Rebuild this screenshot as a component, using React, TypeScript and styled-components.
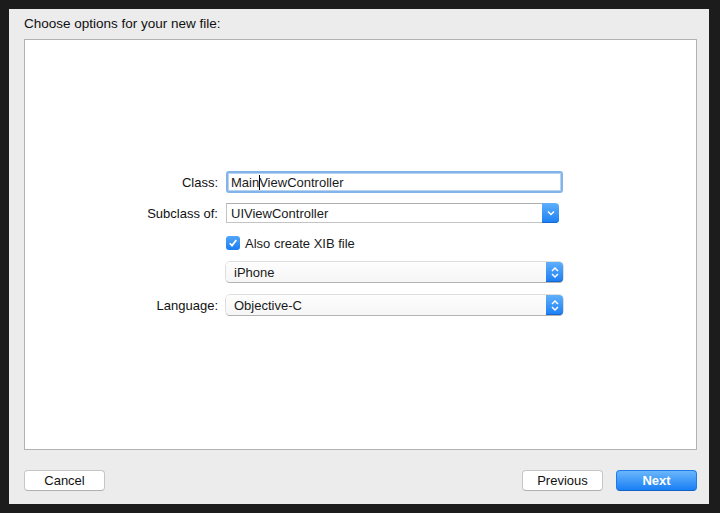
import React from 'react';
import styled, {createGlobalStyle} from 'styled-components';

const GlobalStyle = createGlobalStyle`
  html, body {
    margin: 0;
    padding: 0;
    background: #1c1c1c;
  }
  body {
    font-family: "Liberation Sans", Arial, sans-serif;
    font-size: 13px;
    color: #1a1a1a;
  }
`;

const Frame = styled.div`
  width: 720px;
  height: 513px;
  padding: 9px 11px 9px 9px;
  box-sizing: border-box;
  background: #1c1c1c;
`;

const Dialog = styled.div`
  height: 100%;
  background: #ececec;
  display: flex;
  flex-direction: column;
  padding: 0 12px 0 15px;
  box-sizing: border-box;
`;

const Title = styled.div`
  height: 30px;
  line-height: 29px;
  font-size: 13.5px;
  color: #111;
`;

const Panel = styled.div`
  flex: 1;
  background: #fff;
  border: 1px solid #b2b2b2;
  padding-top: 131px;
  display: flex;
  flex-direction: column;
`;

const Row = styled.div<{$top?: number; $height?: number}>`
  display: flex;
  align-items: center;
  margin-top: ${p => p.$top ?? 0}px;
  height: ${p => p.$height ?? 20}px;
`;

const Label = styled.div`
  width: 201px;
  padding-right: 8px;
  box-sizing: border-box;
  text-align: right;
  color: #111;
`;

const TextField = styled.div<{$width: number}>`
  width: ${p => p.$width}px;
  height: 22px;
  box-sizing: border-box;
  border: 2px solid #82b4ea;
  border-radius: 3px;
  box-shadow: inset 0 0 0 1px #b8d3f2;
  display: flex;
  align-items: center;
  padding-left: 3px;
  background: #fff;
`;

const Caret = styled.span`
  display: inline-block;
  width: 1px;
  height: 15px;
  background: #000;
  vertical-align: middle;
  margin: 0 -1px 0 0;
`;

const Combo = styled.div`
  display: flex;
  width: 333px;
  height: 20px;
`;

const ComboInput = styled.div`
  flex: 1;
  border: 1px solid #c4c4c4;
  border-top-color: #aeaeae;
  border-right: none;
  display: flex;
  align-items: center;
  padding-left: 4px;
  background: #fff;
`;

const BlueCap = styled.div<{$width: number}>`
  width: ${p => p.$width}px;
  height: 100%;
  border-radius: 0 4px 4px 0;
  background: linear-gradient(#5fb0fb, #1b7ef3);
  box-shadow: inset 0 -1px 0 #1467d0;
  display: flex;
  align-items: center;
  justify-content: center;
`;

const Popup = styled.div`
  width: 337px;
  height: 20px;
  display: flex;
  border-radius: 4px;
  box-shadow: 0 0 0 0.5px #bdbdbd, 0 1px 0 #a9a9a9;
  background: linear-gradient(#fdfdfd, #f6f6f6);
`;

const PopupText = styled.div`
  flex: 1;
  display: flex;
  align-items: center;
  padding-left: 8px;
`;

const Check = styled.div`
  width: 14px;
  height: 14px;
  border-radius: 3px;
  background: linear-gradient(#53a6f9, #1a7df2);
  display: flex;
  align-items: center;
  justify-content: center;
  margin-right: 5px;
`;

const CheckRow = styled.div`
  display: flex;
  align-items: center;
`;

const Footer = styled.div`
  height: 54px;
  display: flex;
  align-items: flex-start;
  padding-top: 20px;
  box-sizing: border-box;
  gap: 13px;
`;

const Button = styled.button<{$primary?: boolean}>`
  width: 81px;
  height: 21px;
  border-radius: 4px;
  font-family: "Liberation Sans", Arial, sans-serif;
  font-size: 13px;
  padding: 0;
  cursor: default;
  border: 1px solid ${p => (p.$primary ? '#1e7ae6' : '#c6c6c6')};
  border-bottom-color: ${p => (p.$primary ? '#1462c8' : '#b0b0b0')};
  background: ${p => (p.$primary ? 'linear-gradient(#6ab6fb, #1a7ff5)' : '#fff')};
  color: ${p => (p.$primary ? '#fff' : '#111')};
  font-weight: ${p => (p.$primary ? 'bold' : 'normal')};
`;

const Spacer = styled.div`
  flex: 1;
`;

function Chevron() {
  return (
    <svg width="8" height="6" viewBox="0 0 8 6">
      <path d="M1 1.5 L4 4.5 L7 1.5" fill="none" stroke="#fff" strokeWidth="1.5" />
    </svg>
  );
}

function Stepper() {
  return (
    <svg width="8" height="13" viewBox="0 0 8 13">
      <path d="M1 5 L4 2 L7 5 M1 8 L4 11 L7 8" fill="none" stroke="#fff" strokeWidth="1.5" />
    </svg>
  );
}

function CheckMark() {
  return (
    <svg width="10" height="10" viewBox="0 0 10 10">
      <path d="M1.8 5.2 L4 7.6 L8.3 2" fill="none" stroke="#fff" strokeWidth="1.7" />
    </svg>
  );
}

export default function App() {
  return (
    <Frame>
      <GlobalStyle />
      <Dialog>
        <Title>Choose options for your new file:</Title>
        <Panel>
          <Row $height={22}>
            <Label>Class:</Label>
            <TextField $width={337}>
              Main<Caret />ViewController
            </TextField>
          </Row>
          <Row $top={10}>
            <Label>Subclass of:</Label>
            <Combo>
              <ComboInput>UIViewController</ComboInput>
              <BlueCap $width={17}>
                <Chevron />
              </BlueCap>
            </Combo>
          </Row>
          <Row $top={10}>
            <Label />
            <CheckRow>
              <Check>
                <CheckMark />
              </Check>
              Also create XIB file
            </CheckRow>
          </Row>
          <Row $top={9}>
            <Label />
            <Popup>
              <PopupText>iPhone</PopupText>
              <BlueCap $width={17}>
                <Stepper />
              </BlueCap>
            </Popup>
          </Row>
          <Row $top={13}>
            <Label>Language:</Label>
            <Popup>
              <PopupText>Objective-C</PopupText>
              <BlueCap $width={17}>
                <Stepper />
              </BlueCap>
            </Popup>
          </Row>
        </Panel>
        <Footer>
          <Button>Cancel</Button>
          <Spacer />
          <Button>Previous</Button>
          <Button $primary>Next</Button>
        </Footer>
      </Dialog>
    </Frame>
  );
}
